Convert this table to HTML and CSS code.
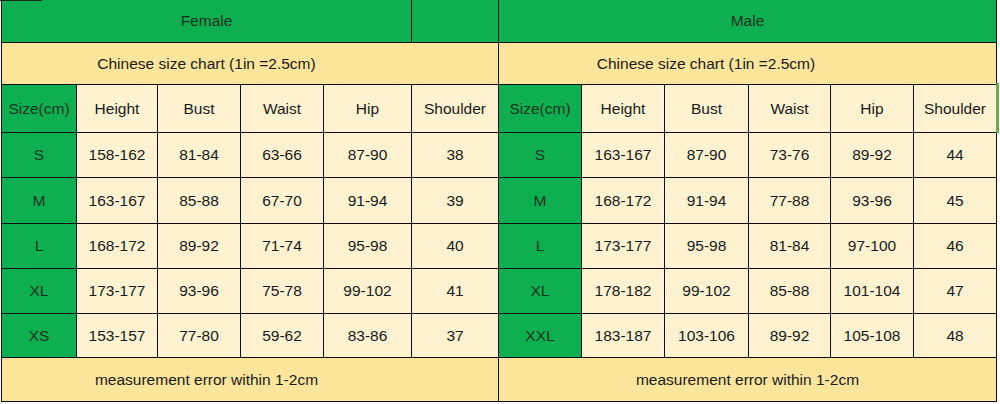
FILE: index.html
```html
<!DOCTYPE html>
<html>
<head>
<meta charset="utf-8">
<link rel="stylesheet" href="styles.css">
</head>
<body>
<div class="sheet">
  <div class="chart">
    <div class="cell g span5">Female</div>
    <div class="cell g"></div>
    <div class="cell g span6">Male</div>

    <div class="cell y span6 pad-f">Chinese size chart (1in =2.5cm)</div>
    <div class="cell y span6 pad-m">Chinese size chart (1in =2.5cm)</div>

    <div class="cell g">Size(cm)</div>
    <div class="cell c">Height</div>
    <div class="cell c">Bust</div>
    <div class="cell c">Waist</div>
    <div class="cell c">Hip</div>
    <div class="cell c">Shoulder</div>
    <div class="cell g">Size(cm)</div>
    <div class="cell c">Height</div>
    <div class="cell c">Bust</div>
    <div class="cell c">Waist</div>
    <div class="cell c">Hip</div>
    <div class="cell c">Shoulder</div>

    <div class="cell g">S</div>
    <div class="cell c">158-162</div>
    <div class="cell c">81-84</div>
    <div class="cell c">63-66</div>
    <div class="cell c">87-90</div>
    <div class="cell c">38</div>
    <div class="cell g">S</div>
    <div class="cell c">163-167</div>
    <div class="cell c">87-90</div>
    <div class="cell c">73-76</div>
    <div class="cell c">89-92</div>
    <div class="cell c">44</div>

    <div class="cell g">M</div>
    <div class="cell c">163-167</div>
    <div class="cell c">85-88</div>
    <div class="cell c">67-70</div>
    <div class="cell c">91-94</div>
    <div class="cell c">39</div>
    <div class="cell g">M</div>
    <div class="cell c">168-172</div>
    <div class="cell c">91-94</div>
    <div class="cell c">77-88</div>
    <div class="cell c">93-96</div>
    <div class="cell c">45</div>

    <div class="cell g">L</div>
    <div class="cell c">168-172</div>
    <div class="cell c">89-92</div>
    <div class="cell c">71-74</div>
    <div class="cell c">95-98</div>
    <div class="cell c">40</div>
    <div class="cell g">L</div>
    <div class="cell c">173-177</div>
    <div class="cell c">95-98</div>
    <div class="cell c">81-84</div>
    <div class="cell c">97-100</div>
    <div class="cell c">46</div>

    <div class="cell g">XL</div>
    <div class="cell c">173-177</div>
    <div class="cell c">93-96</div>
    <div class="cell c">75-78</div>
    <div class="cell c">99-102</div>
    <div class="cell c">41</div>
    <div class="cell g">XL</div>
    <div class="cell c">178-182</div>
    <div class="cell c">99-102</div>
    <div class="cell c">85-88</div>
    <div class="cell c">101-104</div>
    <div class="cell c">47</div>

    <div class="cell g">XS</div>
    <div class="cell c">153-157</div>
    <div class="cell c">77-80</div>
    <div class="cell c">59-62</div>
    <div class="cell c">83-86</div>
    <div class="cell c">37</div>
    <div class="cell g">XXL</div>
    <div class="cell c">183-187</div>
    <div class="cell c">103-106</div>
    <div class="cell c">89-92</div>
    <div class="cell c">105-108</div>
    <div class="cell c">48</div>

    <div class="cell y span6 pad-f">measurement error within 1-2cm</div>
    <div class="cell y span6">measurement error within 1-2cm</div>
  </div>
  <div class="select-mark"></div>
</div>
</body>
</html>
```

FILE: styles.css
```css
html, body {
  margin: 0;
  padding: 0;
  background: #ffffff;
}

body {
  font-family: "Liberation Sans", Arial, sans-serif;
  font-size: 15.5px;
  color: #1a1a1a;
}

.sheet {
  position: relative;
  width: 1000px;
  height: 404px;
}

.sheet::before {
  content: "";
  position: absolute;
  left: 0;
  top: 0;
  width: 42px;
  height: 1px;
  background: #1e2a1e;
}

.chart {
  display: grid;
  grid-template-columns: 74px 80px 82px 82px 87px 86px 82px 82px 83px 81px 82px 82px;
  grid-template-rows: 42px 41px 47px 44px 45px 44px 44px 43px 43px;
  gap: 1px;
  padding: 0 1px 1px 1px;
  margin-left: 1px;
  width: max-content;
  background: #0d0d0d;
}

.cell {
  display: flex;
  align-items: center;
  justify-content: center;
  white-space: nowrap;
}

.g {
  background: #0daf50;
  color: #17331f;
}

.y {
  background: #fee59c;
}

.c {
  background: #fef2d0;
}

.span5 {
  grid-column: span 5;
}

.span6 {
  grid-column: span 6;
}

.pad-f {
  padding-right: 87px;
}

.pad-m {
  padding-right: 83px;
}

.select-mark {
  position: absolute;
  left: 996px;
  top: 83px;
  width: 3px;
  height: 50px;
  background: #6aa84f;
}
```
